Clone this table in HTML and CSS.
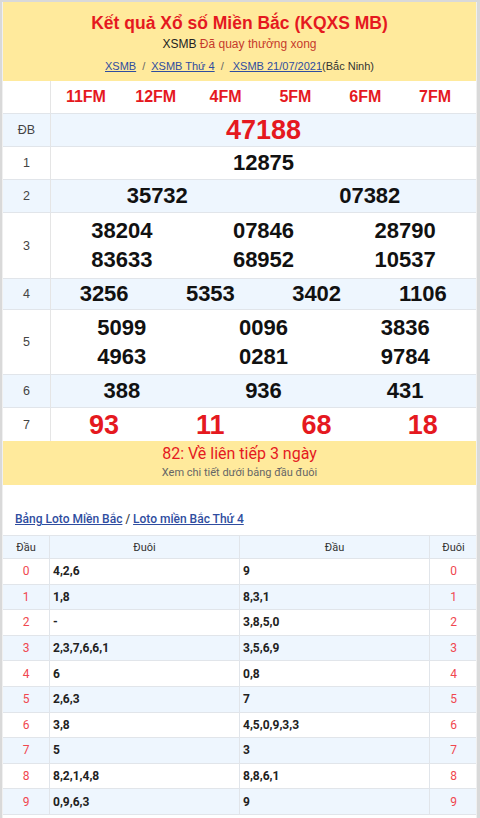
FILE: index.html
```html
<!DOCTYPE html>
<html lang="vi">
<head>
<meta charset="utf-8">
<title>KQXS MB</title>
<link rel="stylesheet" href="styles.css">
</head>
<body>
<div class="page">
  <div class="inner">
    <header class="head">
      <h1 class="title">Kết quả Xổ số Miền Bắc (KQXS MB)</h1>
      <p class="status"><span class="status-code">XSMB</span> Đã quay thưởng xong</p>
      <p class="crumbs"><a href="#">XSMB</a><span class="sep">/</span><a href="#">XSMB Thứ 4</a><span class="sep">/</span><a href="#">&nbsp;XSMB 21/07/2021</a>(Bắc Ninh)</p>
    </header>

    <div class="results">
      <div class="row row-fm">
        <div class="label"></div>
        <div class="cells c6 fm">
          <span>11FM</span><span>12FM</span><span>4FM</span><span>5FM</span><span>6FM</span><span>7FM</span>
        </div>
      </div>
      <div class="row alt h32">
        <div class="label">ĐB</div>
        <div class="cells c1"><span class="num big red">47188</span></div>
      </div>
      <div class="row h32">
        <div class="label">1</div>
        <div class="cells c1"><span class="num">12875</span></div>
      </div>
      <div class="row alt h32">
        <div class="label">2</div>
        <div class="cells c2"><span class="num">35732</span><span class="num">07382</span></div>
      </div>
      <div class="row h65">
        <div class="label">3</div>
        <div class="cells c3">
          <span class="num">38204</span><span class="num">07846</span><span class="num">28790</span>
          <span class="num">83633</span><span class="num">68952</span><span class="num">10537</span>
        </div>
      </div>
      <div class="row alt h30">
        <div class="label">4</div>
        <div class="cells c4"><span class="num">3256</span><span class="num">5353</span><span class="num">3402</span><span class="num">1106</span></div>
      </div>
      <div class="row h64">
        <div class="label">5</div>
        <div class="cells c3">
          <span class="num">5099</span><span class="num">0096</span><span class="num">3836</span>
          <span class="num">4963</span><span class="num">0281</span><span class="num">9784</span>
        </div>
      </div>
      <div class="row alt h32">
        <div class="label">6</div>
        <div class="cells c3"><span class="num">388</span><span class="num">936</span><span class="num">431</span></div>
      </div>
      <div class="row h33 last">
        <div class="label">7</div>
        <div class="cells c4"><span class="num big red">93</span><span class="num big red">11</span><span class="num big red">68</span><span class="num big red">18</span></div>
      </div>
    </div>

    <div class="notice">
      <p class="notice-main">82: Về liên tiếp 3 ngày</p>
      <p class="notice-sub">Xem chi tiết dưới bảng đầu đuôi</p>
    </div>

    <p class="loto-links"><a href="#">Bảng Loto Miền Bắc</a> / <a href="#">Loto miền Bắc Thứ 4</a></p>

    <div class="loto">
      <div class="lrow lhead"><span class="lc c-idx">Đầu</span><span class="lc c-val">Đuôi</span><span class="lc c-val">Đầu</span><span class="lc c-idx">Đuôi</span></div>
      <div class="lrow"><span class="lc c-idx red-i">0</span><span class="lc c-val v">4,2,6</span><span class="lc c-val v">9</span><span class="lc c-idx red-i">0</span></div>
      <div class="lrow alt"><span class="lc c-idx red-i">1</span><span class="lc c-val v">1,8</span><span class="lc c-val v">8,3,1</span><span class="lc c-idx red-i">1</span></div>
      <div class="lrow"><span class="lc c-idx red-i">2</span><span class="lc c-val v">-</span><span class="lc c-val v">3,8,5,0</span><span class="lc c-idx red-i">2</span></div>
      <div class="lrow alt"><span class="lc c-idx red-i">3</span><span class="lc c-val v">2,3,7,6,6,1</span><span class="lc c-val v">3,5,6,9</span><span class="lc c-idx red-i">3</span></div>
      <div class="lrow"><span class="lc c-idx red-i">4</span><span class="lc c-val v">6</span><span class="lc c-val v">0,8</span><span class="lc c-idx red-i">4</span></div>
      <div class="lrow alt"><span class="lc c-idx red-i">5</span><span class="lc c-val v">2,6,3</span><span class="lc c-val v">7</span><span class="lc c-idx red-i">5</span></div>
      <div class="lrow"><span class="lc c-idx red-i">6</span><span class="lc c-val v">3,8</span><span class="lc c-val v">4,5,0,9,3,3</span><span class="lc c-idx red-i">6</span></div>
      <div class="lrow alt"><span class="lc c-idx red-i">7</span><span class="lc c-val v">5</span><span class="lc c-val v">3</span><span class="lc c-idx red-i">7</span></div>
      <div class="lrow"><span class="lc c-idx red-i">8</span><span class="lc c-val v">8,2,1,4,8</span><span class="lc c-val v">8,8,6,1</span><span class="lc c-idx red-i">8</span></div>
      <div class="lrow alt"><span class="lc c-idx red-i">9</span><span class="lc c-val v">0,9,6,3</span><span class="lc c-val v">9</span><span class="lc c-idx red-i">9</span></div>
    </div>
  </div>
</div>
</body>
</html>
```

FILE: styles.css
```css
* { box-sizing: border-box; }
html, body { margin: 0; padding: 0; background: #fff; }
body { width: 480px; font-family: "Liberation Sans", Arial, sans-serif; color: #222; }

.page {
  border-style: solid;
  border-color: #d9d9d9;
  border-width: 2px 3px 0 2px;
  min-height: 816px;
}
.inner {
  border-left: 1px solid #f0f0f0;
  border-right: 1px solid #f0f0f0;
  min-height: 816px;
}

/* header */
.head {
  background: #ffea9c;
  height: 79px;
  text-align: center;
  padding-top: 10px;
}
.title {
  margin: 0;
  font-size: 17.5px;
  line-height: 22px;
  font-weight: bold;
  color: #e5191f;
}
.status {
  margin: 2px 0 0;
  font-size: 12px;
  line-height: 16px;
  color: #c63a2b;
}
.status-code { color: #222; }
.crumbs {
  margin: 7px 0 0;
  font-size: 11px;
  line-height: 15px;
  color: #333;
}
.crumbs a { color: #2f4da0; text-decoration: underline; }
.crumbs .sep { margin: 0 6px; color: #666; }

/* results table */
.row {
  display: flex;
  border-bottom: 1px solid #e1e5ea;
  background: #fff;
}
.row.alt { background: #eef6fe; }
.row.last { border-bottom: 0; }
.row-fm { height: 33px; }
.h32 { height: 33px; }
.h33 { height: 33px; }
.h30 { height: 31px; }
.h64 { height: 65px; }
.h65 { height: 66px; }
.label {
  width: 48px;
  flex: none;
  border-right: 1px solid #e5e5e5;
  display: flex;
  align-items: center;
  justify-content: center;
  font-size: 12.5px;
  color: #444;
}
.cells {
  flex: 1;
  display: grid;
  align-items: center;
  justify-items: center;
}
.c1 { grid-template-columns: 1fr; }
.c2 { grid-template-columns: repeat(2, 1fr); }
.c3 { grid-template-columns: repeat(3, 1fr); padding: 3px 0; }
.c4 { grid-template-columns: repeat(4, 1fr); }
.c6 { grid-template-columns: repeat(6, 1fr); padding-right: 6px; }
.fm span {
  font-size: 16px;
  font-weight: bold;
  color: #e5191f;
}
.num {
  font-size: 22px;
  font-weight: bold;
  color: #111;
  line-height: 26px;
}
.num.big { font-size: 27px; line-height: 30px; }
.num.red { color: #e5191f; }

/* notice */
.notice {
  background: #ffea9c;
  height: 44px;
  text-align: center;
  font-family: Roboto, "Liberation Sans", sans-serif;
  padding-top: 2px;
}
.notice-main {
  margin: 0;
  font-size: 16px;
  line-height: 21px;
  color: #e5191f;
}
.notice-sub {
  margin: 2px 0 0;
  font-size: 11px;
  line-height: 14px;
  color: #666;
}

.loto-links {
  margin: 0;
  padding: 27px 0 0 12px;
  height: 50px;
  font-family: Roboto, "Liberation Sans", sans-serif;
  font-size: 12px;
  font-weight: 500;
  color: #444;
}
.loto-links a { color: #2f4da0; text-decoration: underline; }

/* loto table */
.loto {
  font-family: Roboto, "Liberation Sans", sans-serif;
  border-top: 1px solid #e1e5ea;
}
.lrow {
  display: flex;
  height: 25.6px;
  border-bottom: 1px solid #e1e5ea;
  background: #fff;
}
.lrow.alt { background: #eef6fe; }
.lrow.lhead { height: 23px; background: #eef6fe; }
.lc {
  display: flex;
  align-items: center;
  border-right: 1px solid #e1e5ea;
  font-size: 11px;
  color: #333;
}
.lc:last-child { border-right: 0; }
.c-idx { width: 47px; justify-content: center; flex: none; }
.c-val { width: 190px; flex: none; padding-left: 3px; }
.lhead .c-val { justify-content: center; padding-left: 0; }
.lc.v { font-size: 12px; font-weight: bold; color: #222; }
.lc.red-i { font-size: 12px; color: #f0474f; }
```
